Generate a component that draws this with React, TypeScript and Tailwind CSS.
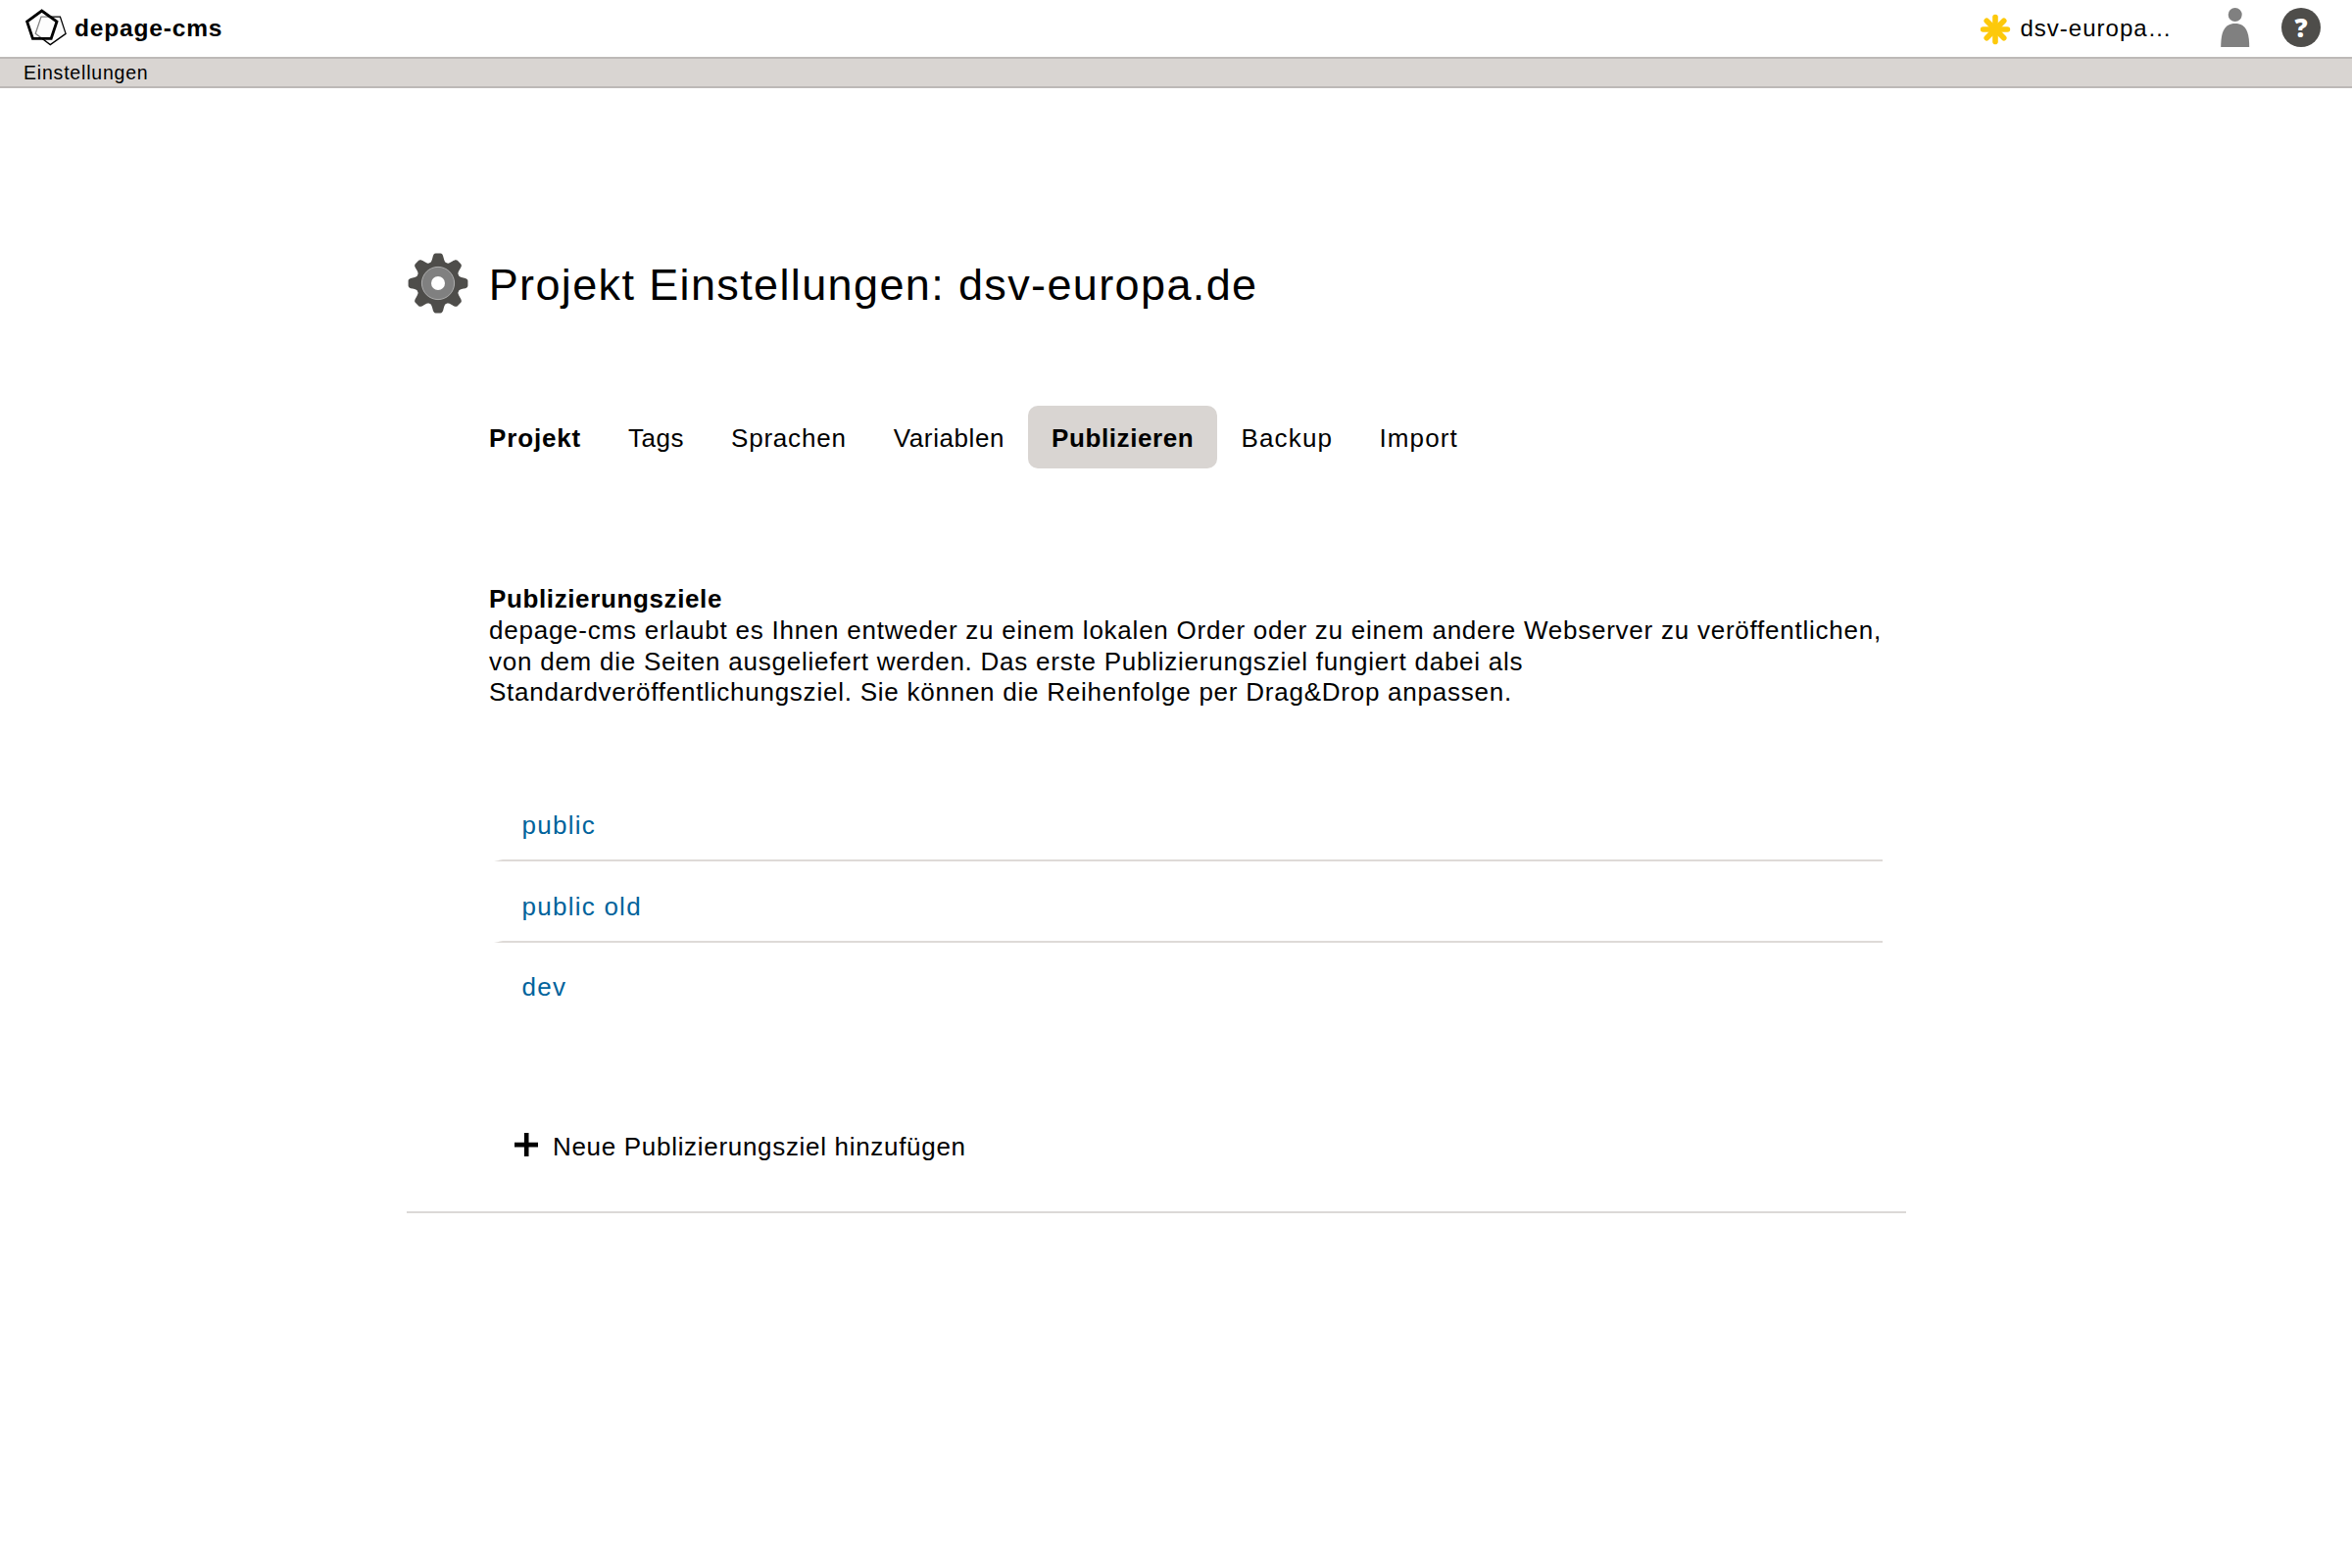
const tabs = [
  { label: 'Projekt', className: 'w-[142px] font-bold tracking-[0.85px]' },
  { label: 'Tags', className: 'w-[105px] tracking-[0.5px]' },
  { label: 'Sprachen', className: 'w-[165.8px] tracking-[0.8px]' },
  { label: 'Variablen', className: 'w-[161.2px] tracking-[0.6px]' },
  { label: 'Publizieren', className: 'w-[193.5px] rounded-[10px] bg-[#d9d5d2] font-bold tracking-[0.6px]' },
  { label: 'Backup', className: 'w-[141px] tracking-[1.15px]' },
  { label: 'Import', className: 'w-[128px] tracking-[1.1px]' },
];

const targets = ['public', 'public old', 'dev'];

const eighths = [0, 45, 90, 135, 180, 225, 270, 315];

function Logo() {
  return (
    <svg className="block shrink-0" width="44" height="42" viewBox="0 0 44 42">
      <path d="M18 10.1H37.4L43.1 27.4L27.3 38.6L12.2 27.3Z" fill="#fafafa" stroke="#000" strokeWidth="1.3" />
      <path d="M18.6 4L34 15L28.2 32.3H9.4L3.6 15Z" fill="#fff" fillOpacity="0.5" stroke="#000" strokeWidth="2.8" />
    </svg>
  );
}

function Sun() {
  return (
    <svg className="block shrink-0" width="32" height="32" viewBox="-16 -16 32 32">
      <circle r="6.2" fill="#fdc90b" />
      {eighths.map((a) => (
        <path key={a} d="M0 -4V-12.4" stroke="#fdc90b" strokeWidth="5.6" strokeLinecap="round" transform={`rotate(${a})`} />
      ))}
    </svg>
  );
}

function User() {
  return (
    <svg className="block shrink-0" width="30" height="42" viewBox="0 0 30 42">
      <circle cx="14.7" cy="8" r="7" fill="#808080" />
      <path d="M0.2 41C0.2 26 3.5 17 14.7 17S29.2 26 29.2 41Z" fill="#808080" />
    </svg>
  );
}

function Gear() {
  return (
    <svg className="block shrink-0" width="62" height="62" viewBox="-31 -31 62 62">
      <circle r="22.4" fill="#4e4d4a" />
      {eighths.map((a) => (
        <path
          key={a}
          d="M-9.6 -19.5C-7 -21 -6.3 -23 -5.6 -26C-5 -29 -4 -30.4 -2.4 -30.4H2.4C4 -30.4 5 -29 5.6 -26C6.3 -23 7 -21 9.6 -19.5Z"
          fill="#4e4d4a"
          transform={`rotate(${a})`}
        />
      ))}
      <circle r="16.6" fill="#808080" stroke="#b5b5b5" strokeWidth="0.9" />
      <circle r="7" fill="#fff" />
    </svg>
  );
}

function Plus() {
  return (
    <svg className="block shrink-0" width="24" height="24" viewBox="0 0 24 24">
      <path d="M12.2 0V24M0 12.1H24" stroke="#000" strokeWidth="4.6" />
    </svg>
  );
}

export default function App() {
  return (
    <div className="h-[1600px] w-[2400px] overflow-hidden bg-white font-['Liberation_Sans',Arial,sans-serif] text-black">
      <header className="flex h-[58px] items-start justify-between pr-8 pl-6 text-[24px] leading-[58px]">
        <div className="flex items-start">
          <div className="pt-[7px]">
            <Logo />
          </div>
          <span className="ml-2 text-[24.5px] font-bold tracking-[0.83px]">depage-cms</span>
        </div>
        <div className="flex items-start">
          <div className="pt-[14px]">
            <Sun />
          </div>
          <span className="ml-[9.5px] w-[204.5px] tracking-[1px]">dsv-europa…</span>
          <div className="pt-[7px]">
            <User />
          </div>
          <div className="mt-2 ml-8 flex size-10 items-center justify-center rounded-full bg-[#4e4d4a] font-['Open_Sans',sans-serif] text-[26px] leading-10 font-extrabold text-white">
            ?
          </div>
        </div>
      </header>
      <nav className="h-8 border-y-2 border-[#bdb9b7] bg-[#d9d5d2] pl-6 text-[19.5px] leading-7 tracking-[0.8px]">
        Einstellungen
      </nav>
      <main className="ml-[415px] h-[1148px] w-[1530px] border-b-2 border-[#dbd9d7] pt-[168px] text-[26px]">
        <div className="flex items-start pl-[0.7px]">
          <Gear />
          <h1 className="-mt-px ml-[21px] pt-1 text-[45px] leading-[60px] font-normal tracking-[1.37px]">
            Projekt Einstellungen: dsv-europa.de
          </h1>
        </div>
        <div className="mt-[93px] ml-[60px] flex h-16 leading-[62px]">
          {tabs.map((t) => (
            <div key={t.label} className={`shrink-0 pt-0.5 pl-6 whitespace-nowrap ${t.className}`}>
              {t.label}
            </div>
          ))}
        </div>
        <div className="mt-[118px] ml-[84px] leading-[31.8px] tracking-[0.76px] whitespace-nowrap">
          <h2 className="font-bold tracking-[0.62px]">Publizierungsziele</h2>
          <p>
            depage-cms erlaubt es Ihnen entweder zu einem lokalen Order oder zu einem andere Webserver zu veröffentlichen,
            <br />
            von dem die Seiten ausgeliefert werden. Das erste Publizierungsziel fungiert dabei als
            <br />
            Standardveröffentlichungsziel. Sie können die Reihenfolge per Drag&amp;Drop anpassen.
          </p>
        </div>
        <ul className="mt-[72.8px] ml-[89px] w-[1417px] leading-8 tracking-[1.25px] text-[#00639c]">
          {targets.map((t) => (
            <li
              key={t}
              className="h-[83px] border-b-2 border-l-[9px] border-b-[#dedad7] border-l-transparent pt-[30px] pl-[19.5px] last:border-b-transparent last:pt-[29px]"
            >
              {t}
            </li>
          ))}
        </ul>
        <div className="mt-[109px] ml-[110px] flex items-start leading-8 tracking-[0.69px]">
          <div className="pt-0.5">
            <Plus />
          </div>
          <span className="ml-[15px]">Neue Publizierungsziel hinzufügen</span>
        </div>
      </main>
    </div>
  );
}
